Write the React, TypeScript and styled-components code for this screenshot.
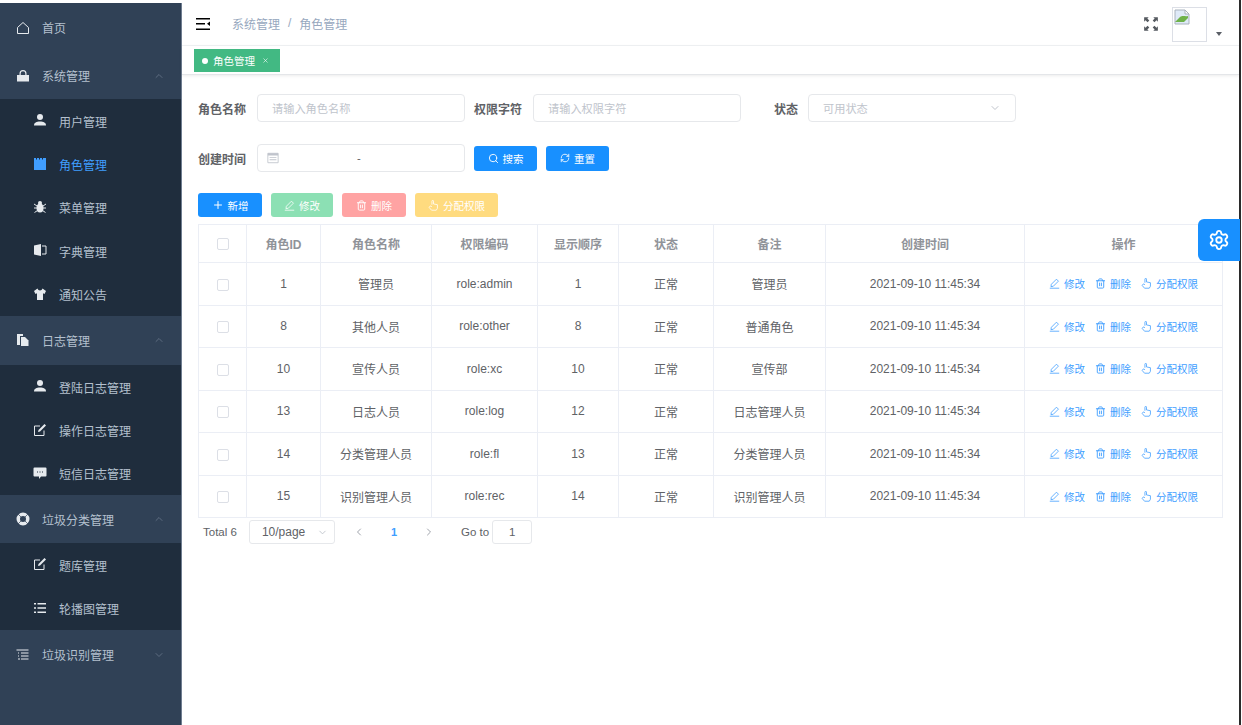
import React from 'react';
import styled, { createGlobalStyle } from 'styled-components';
import { ChevronDown, ChevronLeft, ChevronRight, ChevronUp, Plus, RefreshCw, Search, Settings, Trash2, X } from 'lucide-react';

const GlobalStyle = createGlobalStyle`
  html, body {
    margin: 0;
    padding: 0;
    height: 100%;
    overflow: hidden;
    background: #fff;
    font-family: "Liberation Sans", "Noto Sans CJK SC", sans-serif;
  }
  * { box-sizing: border-box; }
`;

const Shell = styled.div`
  display: flex;
  width: 1241px;
  height: 725px;
  padding-top: 3px;
  background: #fff;
  border-right: 2px solid #2b2b2b;
`;

const Sidebar = styled.aside`
  flex: 0 0 182px;
  background: #304156;
  border-right: 1px solid #6f7d90;
  color: #bfcbd9;
`;

const MenuHead = styled.div<{ $h: number }>`
  display: flex;
  align-items: center;
  height: ${p => p.$h}px;
  padding: 0 16px;
  font-size: 12px;
  color: #b4c0ce;
`;

const HeadIcon = styled.span`
  display: flex;
  width: 26px;
  color: #e6eaee;
`;

const Arrow = styled.span`
  display: flex;
  margin-left: auto;
  color: #5d6c80;
`;

const SubList = styled.div`
  padding-top: 0.5px;
  background: #1f2d3d;
`;

const SubItem = styled.div<{ $active?: boolean }>`
  display: flex;
  align-items: center;
  height: 43.3px;
  padding: 0.5px 0 0 33px;
  font-size: 12px;
  color: ${p => (p.$active ? '#409eff' : '#b4c0ce')};
`;

const SubIcon = styled.span<{ $active?: boolean }>`
  display: flex;
  width: 26px;
  margin-top: -2px;
  color: ${p => (p.$active ? '#409eff' : '#e6eaee')};
`;

const Main = styled.main`
  flex: 1;
  min-width: 0;
  display: flex;
  flex-direction: column;
  position: relative;
`;

const Navbar = styled.header`
  display: flex;
  align-items: center;
  height: 43px;
  padding: 0 17px 0 14px;
  border-bottom: 1px solid #f0f2f4;
`;

const Crumbs = styled.div`
  margin: -2px 0 0 22px;
  font-size: 12px;
  color: #97a8be;
  display: flex;
  align-items: center;
  gap: 8px;
`;

const NavRight = styled.div`
  margin-left: auto;
  display: flex;
  align-items: center;
  color: #555a60;
`;

const Avatar = styled.div`
  width: 35px;
  height: 35px;
  margin-left: 13px;
  border: 1px solid #dcdfe6;
  padding: 1px;
`;

const Caret = styled.span`
  width: 0;
  height: 0;
  margin: 19px 0 0 9px;
  border-left: 3px solid transparent;
  border-right: 3px solid transparent;
  border-top: 4px solid #5a5e66;
`;

const TagsBar = styled.div`
  height: 29px;
  padding: 3px 12px;
  border-bottom: 1px solid #e4e6e9;
  box-shadow: 0 1px 3px rgba(0, 0, 0, 0.08);
`;

const Tag = styled.div`
  display: inline-flex;
  align-items: center;
  width: 86px;
  height: 23px;
  padding-left: 8px;
  background: #42b983;
  color: #fff;
  font-size: 10.5px;
`;

const Dot = styled.i`
  width: 6px;
  height: 6px;
  margin-right: 5px;
  border-radius: 50%;
  background: #fff;
`;

const Content = styled.div`
  padding: 19px 17px 0 16px;
`;

const FormRow = styled.div`
  display: flex;
  align-items: center;
  height: 28px;
  margin-bottom: 22px;
`;

const FieldLabel = styled.label<{ $w?: number }>`
  width: ${p => p.$w ?? 59}px;
  font-size: 12px;
  font-weight: 700;
  color: #606266;
  text-align: ${p => (p.$w ? 'right' : 'left')};
  padding-right: 10px;
`;

const FieldBox = styled.div<{ $pad?: number }>`
  display: flex;
  align-items: center;
  width: 208px;
  height: 28px;
  margin-right: 9px;
  padding: 0 ${p => p.$pad ?? 14}px;
  border: 1px solid #e6e8eb;
  border-radius: 4px;
  font-size: 11.2px;
  color: #c0c4cc;
`;

const Dash = styled.span`
  margin-left: 78px;
  color: #606266;
`;

const Btn = styled.button<{ $bg: string; $w: number; $h?: number }>`
  display: inline-flex;
  align-items: center;
  justify-content: center;
  gap: 4px;
  width: ${p => p.$w}px;
  height: ${p => p.$h ?? 24}px;
  padding: 0;
  border: 0;
  border-radius: 3px;
  background: ${p => p.$bg};
  color: #fff;
  font: inherit;
  font-size: 10.5px;
`;

const Toolbar = styled.div`
  display: flex;
  gap: 9px;
  margin: -1px 0 7px;
`;

const Table = styled.table`
  width: 1024px;
  border-collapse: collapse;
  table-layout: fixed;
  font-size: 12px;
  color: #606266;
  text-align: center;

  th, td {
    padding: 0;
    border: 1px solid #ebeef5;
  }
  th {
    height: 38px;
    color: #909399;
    font-weight: 700;
  }
  td {
    height: 42.5px;
  }
`;

const Check = styled.span`
  display: inline-block;
  width: 12px;
  height: 12px;
  vertical-align: middle;
  border: 1px solid #dcdfe6;
  border-radius: 2px;
`;

const Actions = styled.div`
  display: flex;
  justify-content: center;
  gap: 10px;
  font-size: 10.5px;
  color: #409eff;
`;

const Action = styled.span`
  display: inline-flex;
  align-items: center;
  gap: 4px;
`;

const Pager = styled.div`
  display: flex;
  align-items: center;
  height: 24px;
  margin-top: 2px;
  padding-left: 5px;
  font-size: 11.5px;
  color: #606266;
`;

const PageSize = styled.div`
  display: flex;
  align-items: center;
  justify-content: space-between;
  width: 86px;
  height: 24px;
  margin: 0 18px 0 12px;
  padding: 0 6px 0 12px;
  border: 1px solid #e6e8eb;
  border-radius: 3px;
  font-size: 12px;
`;

const PageNum = styled.b`
  margin: 0 26px;
  color: #409eff;
  font-size: 11px;
`;

const GoLabel = styled.span`
  margin-left: 26px;
`;

const GoTo = styled.div`
  display: flex;
  align-items: center;
  justify-content: center;
  width: 40px;
  height: 24px;
  margin-left: 3px;
  border: 1px solid #e6e8eb;
  border-radius: 3px;
`;

const SettingsTab = styled.div`
  position: absolute;
  top: 216px;
  right: -1px;
  display: flex;
  align-items: center;
  justify-content: center;
  width: 42px;
  height: 42px;
  border-radius: 6px 0 0 6px;
  background: #1890ff;
  color: #fff;
`;

type IconProps = { size?: number };

const Glyph: React.FC<React.PropsWithChildren<IconProps>> = ({ size = 14, children }) => (
  <svg width={size} height={size} viewBox="0 0 14 14" fill="currentColor">{children}</svg>
);

const HomeIcon = () => <Glyph><path d="M1.5 6.5 7 1.5l5.5 5v6h-11z" fill="none" stroke="currentColor" strokeWidth="1" /></Glyph>;
const LockIcon = () => <Glyph><path fillRule="evenodd" d="M1 6h12v6.500H1zM3.500 6V4.500a3.500 3.500 0 0 1 7 0V6H9.300V4.500a2.300 2.300 0 0 0-4.600 0V6z" /></Glyph>;
const UserIcon = () => <Glyph><circle cx="7" cy="4" r="3" /><path d="M1 12.5c0-3 2.5-4 6-4s6 1 6 4z" /></Glyph>;
const FolderIcon = () => <Glyph><path d="M1 1h2v1.5h1V1h2v1.5h1V1h2v1.5h1V1h3v12H1z" /></Glyph>;
const BugIcon = () => <Glyph><ellipse cx="7" cy="8" rx="3.5" ry="4.5" /><circle cx="7" cy="3" r="2" /><path d="M1 4l3 2M13 4l-3 2M1 8h3M13 8h-3M1.5 12.5l3-2M12.5 12.5l-3-2" stroke="currentColor" fill="none" /></Glyph>;
const DictIcon = () => <Glyph><path d="M1 2.5 8 1v12l-7-1.5z" /><path d="M9 3h4v8H9" fill="none" stroke="currentColor" /></Glyph>;
const ShirtIcon = () => <Glyph><path d="M4.5 1.5 1 4l1.500 3 1.500-.8V13h6V6.200l1.500.8L13 4 9.500 1.500a2.600 2.600 0 0 1-5 0z" /></Glyph>;
const FilesIcon = () => <Glyph><path d="M1 1h6v2H4v9H1z" /><path d="M5 4h4l3.500 3.500V13H5z" /></Glyph>;
const EditIcon = () => <Glyph><path d="M11 7.500V12.500H1.500V3H7" fill="none" stroke="currentColor" strokeWidth="1" /><path d="M5 9l.5-2L11.500 1l1.500 1.500L7 8.500z" /></Glyph>;
const ChatIcon = () => <Glyph><path d="M1.500 1.500h11a1 1 0 0 1 1 1v7a1 1 0 0 1-1 1H8l-2 2.500v-2.500H1.500a1 1 0 0 1-1-1v-7a1 1 0 0 1 1-1z" /><path d="M4 6h1M6.500 6h1M9 6h1" stroke="#1f2d3d" /></Glyph>;
const RingIcon = () => (
  <Glyph>
    <path fillRule="evenodd" d="M7 .5a6.500 6.500 0 1 1 0 13 6.500 6.500 0 0 1 0-13zM7 4a3 3 0 1 0 0 6 3 3 0 0 0 0-6z" />
    <path d="M2 2l3 3M12 2 9 5M2 12l3-3M12 12 9 9" stroke="#304156" strokeWidth="0.7" fill="none" />
  </Glyph>
);
const ListIcon = () => <Glyph><path d="M1 2h2v1.500H1zM4.500 2H13v1.500H4.500zM1 6.200h2v1.500H1zM4.500 6.200H13v1.500H4.500zM1 10.500h2V12H1zM4.500 10.500H13V12H4.500z" /></Glyph>;
const TreeIcon = () => <Glyph><path d="M.5 1.500h12v1h-12zM5 4.500h7.500v1H5zM5 7.500h7.500v1H5zM2 10.500h2v1H2zM5 10.500h7.500v1H5zM2 4.500h1v1H2zM2 7.500h1v1H2z" /></Glyph>;
const HamburgerIcon = () => <Glyph><path d="M0 1h14v1.400H0zM0 6h9v1.400H0zM0 11.500h14v1.400H0zM14 4.500v4.400l-3-2.200z" /></Glyph>;
const FullscreenIcon = () => (
  <Glyph size={16}>
    <path d="M1 1h4L3.800 2.200 5.500 4 4 5.500 2.200 3.800 1 5zM13 1H9l1.200 1.200L8.500 4 10 5.500l1.800-1.700L13 5zM1 13h4l-1.200-1.200L5.500 10 4 8.500l-1.800 1.700L1 9zM13 13H9l1.200-1.200L8.500 10 10 8.500l1.800 1.700L13 9z" />
  </Glyph>
);
const CalendarIcon = () => <Glyph size={12}><path d="M1 1.500h12v11H1z" fill="none" stroke="#c0c4cc" /><path d="M1 1.500h12V4H1zM3 6h8v1H3zM3 8.500h8v1H3z" fill="#c0c4cc" /></Glyph>;
const PenIcon = () => <Glyph size={11}><path d="M9.500 1.500 12 4 5.500 10.500l-3 .5.500-3zM1 13h12" fill="none" stroke="currentColor" /></Glyph>;
const ThumbIcon = () => <Glyph size={11}><path d="M5 6V1.500a1 1 0 0 1 2 0V5l5 1v4.500L10.500 13H4.500L1.500 9.500 3 7.500l2 1" fill="none" stroke="currentColor" /></Glyph>;

const BrokenImage = () => (
  <svg width="16" height="16" viewBox="0 0 16 16">
    <path d="M1 1h10l4 4v10H1z" fill="#dfeaf8" stroke="#a9b2bd" />
    <path d="M1 13 6 8c3-2 5 0 8-1v2l-4 4z" fill="#6fb24a" />
    <path d="M11 1v4h4z" fill="#fff" stroke="#a9b2bd" />
  </svg>
);

type Child = { label: string; icon: React.ReactNode; active?: boolean };
type Group = { label: string; icon: React.ReactNode; h: number; open?: boolean; children?: Child[] };

const menu: Group[] = [
  { label: '系统管理', icon: <LockIcon />, h: 47, open: true, children: [
    { label: '用户管理', icon: <UserIcon /> },
    { label: '角色管理', icon: <FolderIcon />, active: true },
    { label: '菜单管理', icon: <BugIcon /> },
    { label: '字典管理', icon: <DictIcon /> },
    { label: '通知公告', icon: <ShirtIcon /> },
  ] },
  { label: '日志管理', icon: <FilesIcon />, h: 49, open: true, children: [
    { label: '登陆日志管理', icon: <UserIcon /> },
    { label: '操作日志管理', icon: <EditIcon /> },
    { label: '短信日志管理', icon: <ChatIcon /> },
  ] },
  { label: '垃圾分类管理', icon: <RingIcon />, h: 47.5, open: true, children: [
    { label: '题库管理', icon: <EditIcon /> },
    { label: '轮播图管理', icon: <ListIcon /> },
  ] },
  { label: '垃圾识别管理', icon: <TreeIcon />, h: 50 },
];

const roles = [
  ['1', '管理员', 'role:admin', '1', '正常', '管理员'],
  ['8', '其他人员', 'role:other', '8', '正常', '普通角色'],
  ['10', '宣传人员', 'role:xc', '10', '正常', '宣传部'],
  ['13', '日志人员', 'role:log', '12', '正常', '日志管理人员'],
  ['14', '分类管理人员', 'role:fl', '13', '正常', '分类管理人员'],
  ['15', '识别管理人员', 'role:rec', '14', '正常', '识别管理人员'],
];

const columns = [48, 74, 111, 106, 81, 95, 112, 199, 198];
const headers = ['角色ID', '角色名称', '权限编码', '显示顺序', '状态', '备注', '创建时间', '操作'];

const App: React.FC = () => (
  <Shell>
    <GlobalStyle />
    <Sidebar>
      <MenuHead $h={49}>
        <HeadIcon><HomeIcon /></HeadIcon>
        首页
      </MenuHead>
      {menu.map(group => (
        <React.Fragment key={group.label}>
          <MenuHead $h={group.h}>
            <HeadIcon>{group.icon}</HeadIcon>
            {group.label}
            <Arrow>{group.open ? <ChevronUp size={12} /> : <ChevronDown size={12} />}</Arrow>
          </MenuHead>
          {group.children && (
            <SubList>
              {group.children.map(child => (
                <SubItem key={child.label} $active={child.active}>
                  <SubIcon $active={child.active}>{child.icon}</SubIcon>
                  {child.label}
                </SubItem>
              ))}
            </SubList>
          )}
        </React.Fragment>
      ))}
    </Sidebar>

    <Main>
      <Navbar>
        <HamburgerIcon />
        <Crumbs>
          <span>系统管理</span>
          <span>/</span>
          <span>角色管理</span>
        </Crumbs>
        <NavRight>
          <FullscreenIcon />
          <Avatar><BrokenImage /></Avatar>
          <Caret />
        </NavRight>
      </Navbar>

      <TagsBar>
        <Tag>
          <Dot />
          角色管理
          <X size={7} style={{ marginLeft: 7 }} />
        </Tag>
      </TagsBar>

      <Content>
        <FormRow>
          <FieldLabel>角色名称</FieldLabel>
          <FieldBox>请输入角色名称</FieldBox>
          <FieldLabel>权限字符</FieldLabel>
          <FieldBox>请输入权限字符</FieldBox>
          <FieldLabel $w={58}>状态</FieldLabel>
          <FieldBox>
            可用状态
            <ChevronDown size={12} style={{ marginLeft: 'auto' }} />
          </FieldBox>
        </FormRow>
        <FormRow>
          <FieldLabel>创建时间</FieldLabel>
          <FieldBox $pad={9}>
            <CalendarIcon />
            <Dash>-</Dash>
          </FieldBox>
          <Btn $bg="#1890ff" $w={63} $h={25}><Search size={11} />搜索</Btn>
          <Btn $bg="#1890ff" $w={63} $h={25} style={{ marginLeft: 9 }}><RefreshCw size={10} />重置</Btn>
        </FormRow>

        <Toolbar>
          <Btn $bg="#1890ff" $w={64}><Plus size={12} />新增</Btn>
          <Btn $bg="#8ce0b4" $w={62}><PenIcon />修改</Btn>
          <Btn $bg="#ffa3a3" $w={64}><Trash2 size={11} />删除</Btn>
          <Btn $bg="#ffdb7f" $w={83}><ThumbIcon />分配权限</Btn>
        </Toolbar>

        <Table>
          <colgroup>
            {columns.map((w, i) => <col key={i} width={w} />)}
          </colgroup>
          <thead>
            <tr>
              <th><Check /></th>
              {headers.map(h => <th key={h}>{h}</th>)}
            </tr>
          </thead>
          <tbody>
            {roles.map(row => (
              <tr key={row[0]}>
                <td><Check /></td>
                {row.map((cell, i) => <td key={i}>{cell}</td>)}
                <td>2021-09-10 11:45:34</td>
                <td>
                  <Actions>
                    <Action><PenIcon />修改</Action>
                    <Action><Trash2 size={11} />删除</Action>
                    <Action><ThumbIcon />分配权限</Action>
                  </Actions>
                </td>
              </tr>
            ))}
          </tbody>
        </Table>

        <Pager>
          Total 6
          <PageSize>10/page<ChevronDown size={11} color="#c0c4cc" /></PageSize>
          <ChevronLeft size={12} color="#a0a4ac" />
          <PageNum>1</PageNum>
          <ChevronRight size={12} color="#a0a4ac" />
          <GoLabel>Go to</GoLabel>
          <GoTo>1</GoTo>
        </Pager>
      </Content>

      <SettingsTab><Settings size={22} /></SettingsTab>
    </Main>
  </Shell>
);

export default App;
